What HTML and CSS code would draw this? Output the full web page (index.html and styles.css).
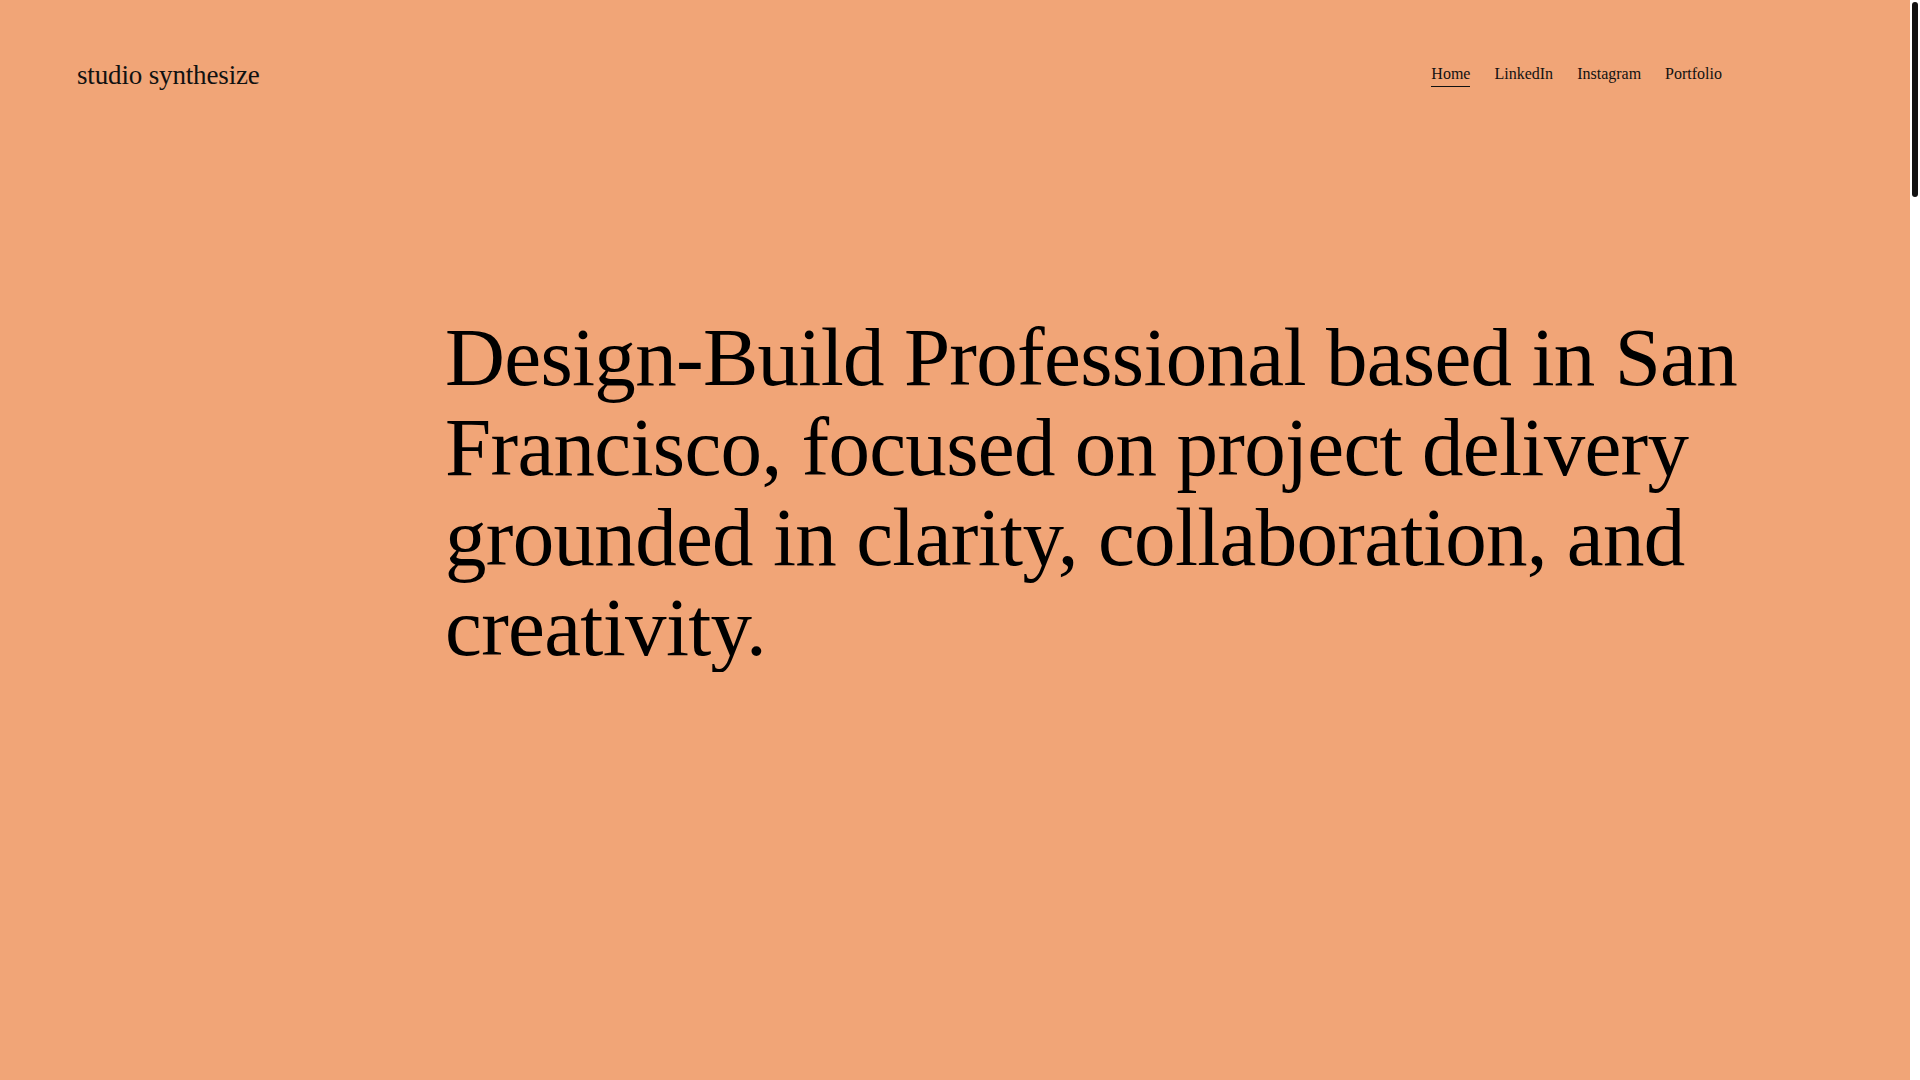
FILE: index.html
```html
<!DOCTYPE html>
<html lang="en">
<head>
<meta charset="utf-8">
<title>studio synthesize</title>
<link rel="stylesheet" href="styles.css">
</head>
<body>
<header class="site-header">
  <a class="logo" href="#">studio synthesize</a>
  <nav class="nav">
    <a class="nav-link active" href="#">Home</a>
    <a class="nav-link" href="#">LinkedIn</a>
    <a class="nav-link" href="#">Instagram</a>
    <a class="nav-link" href="#">Portfolio</a>
  </nav>
</header>
<main class="main">
  <h1 class="intro">Design-Build Professional based in San Francisco, focused on project delivery grounded in clarity, collaboration, and creativity.</h1>
</main>
<div class="scrollbar" aria-hidden="true"><div class="scrollbar-thumb"></div></div>
</body>
</html>
```
FILE: styles.css
```css
html {
  background: #f1a577;
}
body {
  margin: 0;
  background: #f1a577;
  color: #000;
  font-family: "Liberation Serif", "Times New Roman", serif;
  overflow: hidden;
}
a {
  color: inherit;
  text-decoration: none;
}
.site-header {
  display: flex;
  justify-content: space-between;
  align-items: flex-start;
  padding: 59px 198px 0 77px;
}
.logo {
  font-size: 27px;
  line-height: 32px;
  color: #111;
  letter-spacing: -0.15px;
}
.nav {
  display: flex;
  gap: 24px;
  margin-top: 5px;
}
.nav-link {
  font-size: 16px;
  line-height: 20px;
  color: #111;
  padding-bottom: 2px;
  border-bottom: 1px solid transparent;
}
.nav-link.active {
  border-bottom-color: #111;
}
.main {
  padding: 221px 0 0 445px;
}
.intro {
  margin: 0;
  max-width: 1320px;
  font-weight: 400;
  font-size: 83px;
  line-height: 90px;
  letter-spacing: -0.7px;
}
.scrollbar {
  position: fixed;
  top: 0;
  right: 0;
  bottom: 0;
  width: 10px;
  background: #ffffff;
}
.scrollbar-thumb {
  margin: 2px 2px 0 2px;
  height: 195px;
  background: #111111;
  border-radius: 3px;
}
```
